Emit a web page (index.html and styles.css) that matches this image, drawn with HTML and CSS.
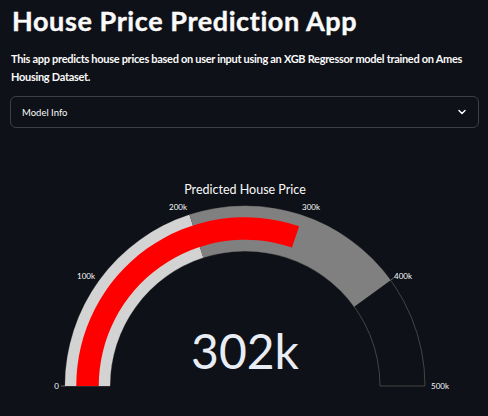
FILE: index.html
```html
<!DOCTYPE html>
<html>
<head>
<meta charset="utf-8">
<link rel="stylesheet" href="styles.css">
</head>
<body>
<main class="app">
  <h1 class="title">House Price Prediction App</h1>
  <p class="intro">This app predicts house prices based on user input using an XGB Regressor model trained on Ames Housing Dataset.</p>
  <div class="expander">
    <span class="expander-label">Model Info</span>
    <svg class="chevron" width="10" height="10" viewBox="0 0 10 10"><path d="M2 3.5 L5 6.5 L8 3.5" fill="none" stroke="#fafafa" stroke-width="1.5" stroke-linecap="round" stroke-linejoin="round"/></svg>
  </div>
  <div class="chart">
    <svg class="gauge" width="468" height="246" viewBox="0 0 468 246">
      <text class="g-title" x="235" y="23" text-anchor="middle">Predicted House Price</text>
      <path d="M55,215 A180,180 0 0 1 415,215 L370,215 A135,135 0 0 0 100,215 Z" fill="none" stroke="#444" stroke-width="1"/>
      <path d="M55,215 A180,180 0 0 1 179.38,43.81 L193.28,86.61 A135,135 0 0 0 100,215 Z" fill="#d3d3d3"/>
      <path d="M179.38,43.81 A180,180 0 0 1 380.62,109.20 L344.22,135.65 A135,135 0 0 0 193.28,86.61 Z" fill="#808080"/>
      <path d="M66.25,215 A168.75,168.75 0 0 1 289.17,55.18 L281.94,76.49 A146.25,146.25 0 0 0 88.75,215 Z" fill="#ff0000"/>
      <g class="ticks" stroke="#666" stroke-width="1">
        <line x1="51" y1="215" x2="55" y2="215"/>
        <line x1="380.62" y1="109.2" x2="383.8" y2="106.9"/>
      </g>
      <g class="tick-labels">
        <text x="49" y="218" text-anchor="end">0</text>
        <text x="85" y="108" text-anchor="end">100k</text>
        <text x="177" y="39" text-anchor="end">200k</text>
        <text x="292" y="39" text-anchor="start">300k</text>
        <text x="384" y="108" text-anchor="start">400k</text>
        <text x="421" y="218" text-anchor="start">500k</text>
      </g>
      <text class="g-value" x="235" y="198" text-anchor="middle">302k</text>
    </svg>
  </div>
</main>
</body>
</html>
```
FILE: styles.css
```css
html, body {
  margin: 0;
  padding: 0;
  background: #0e1117;
  overflow: hidden;
}
body {
  width: 488px;
  height: 416px;
  color: #fafafa;
  font-family: "Lato", "Liberation Sans", sans-serif;
}
.app {
  padding: 0 9px 0 10px;
}
.title {
  margin: 0;
  padding: 6px 0 0 2px;
  font-size: 27px;
  line-height: 30px;
  font-weight: 700;
  letter-spacing: 0.6px;
  color: #fafafa;
  -webkit-text-stroke: 0.4px #fafafa;
}
.intro {
  margin: 14px 0 0 1px;
  font-size: 11px;
  line-height: 18px;
  font-weight: 700;
  letter-spacing: -0.3px;
  color: #fafafa;
}
.expander {
  margin-top: 10px;
  height: 30px;
  border: 1px solid rgba(250, 250, 250, 0.2);
  border-radius: 6px;
  display: flex;
  align-items: center;
  justify-content: space-between;
  padding: 0 11px 0 11px;
}
.expander-label {
  font-size: 9.5px;
  font-weight: 400;
  color: #fafafa;
}
.chevron {
  display: block;
}
.chart {
  margin-top: 43px;
}
.gauge {
  display: block;
}
.g-title {
  font-size: 12.5px;
  fill: #fafafa;
}
.tick-labels text {
  font-size: 8px;
  fill: #fafafa;
}
.g-value {
  font-size: 48px;
  fill: #e8ecf4;
}
```
